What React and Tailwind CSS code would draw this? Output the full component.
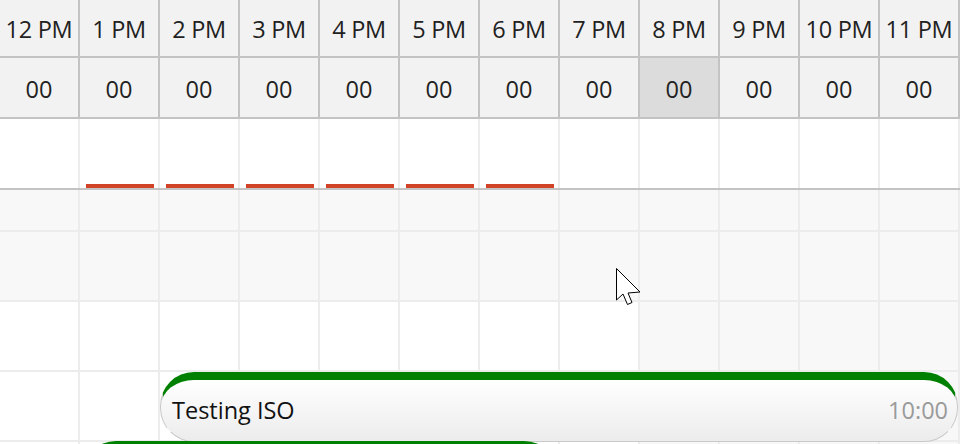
import React from "react";

const hours = ["12 PM", "1 PM", "2 PM", "3 PM", "4 PM", "5 PM", "6 PM", "7 PM", "8 PM", "9 PM", "10 PM", "11 PM"];

// body rows: height includes the 2px bottom line, shadeFrom = first shaded column
const rows = [
  { h: "h-[42px]", shadeFrom: 0 },
  { h: "h-[70px]", shadeFrom: 0 },
  { h: "h-[70px]", shadeFrom: 8 },
  { h: "h-[70px]", shadeFrom: 8 },
  { h: "h-[70px]", shadeFrom: 8 },
];

const Event = ({ title, time, className }) => (
  <div
    className={`absolute h-[70px] rounded-[34px] border border-[#c9c9c9] border-t-[8px] border-t-[#008000] bg-gradient-to-b from-white to-[#ececec] flex items-center justify-between pl-[11px] pr-[9px] text-[23.5px] ${className}`}
  >
    <span className="text-[#111]">{title}</span>
    <span className="text-[#9a9a9a]">{time}</span>
  </div>
);

export default function App() {
  return (
    <div className="relative w-[960px] h-[444px] overflow-hidden bg-white font-['Open_Sans',sans-serif]">
      {/* HOURS */}
      <div className="flex">
        {hours.map((h) => (
          <div
            key={h}
            className="w-20 shrink-0 h-[58px] pt-[3px] border-r-2 border-b-2 border-[#c3c3c3] bg-[#f2f2f2] flex items-center justify-center text-[23.5px] text-[#222] whitespace-nowrap tracking-[-0.3px]"
          >
            {h}
          </div>
        ))}
      </div>

      {/* MINUTES */}
      <div className="flex">
        {hours.map((h, i) => (
          <div
            key={h}
            className={`w-20 shrink-0 h-[61px] pt-[4px] border-r-2 border-b-2 border-[#c3c3c3] flex items-center justify-center text-[23.5px] text-[#222] ${
              i === 8 ? "bg-[#dcdcdc]" : "bg-[#f2f2f2]"
            }`}
          >
            00
          </div>
        ))}
      </div>

      {/* ALL DAY ROW */}
      <div className="flex border-b-2 border-[#c3c3c3]">
        {hours.map((h, i) => (
          <div
            key={h}
            className="w-20 shrink-0 h-[69px] border-r-2 border-[#ececec] flex items-end pl-[6px] pr-[4px]"
          >
            {i >= 1 && i <= 6 && <div className="w-full h-1 bg-[#d04327]" />}
          </div>
        ))}
      </div>

      {/* GRID */}
      {rows.map((r, ri) => (
        <div key={ri} className="flex">
          {hours.map((h, i) => (
            <div
              key={h}
              className={`w-20 shrink-0 ${r.h} border-r-2 border-b-2 border-[#ececec] ${
                i >= r.shadeFrom ? "bg-[#f8f8f8]" : "bg-white"
              }`}
            />
          ))}
        </div>
      ))}

      {/* EVENTS */}
      <Event title="Testing ISO" time="10:00" className="left-[160px] top-[372px] w-[798px]" />
      <Event title="" time="" className="left-[82px] top-[441px] w-[476px]" />

      {/* CURSOR */}
      <svg className="absolute left-[616px] top-[268px]" width="26" height="38" viewBox="0 0 26 38">
        <path
          d="M0.5 0.5 L0.5 32 L7 26 L11.5 36.5 L16 34.5 L12 25 L24 24 Z"
          fill="white"
          stroke="black"
          strokeWidth="1"
          strokeLinejoin="miter"
        />
      </svg>
    </div>
  );
}
